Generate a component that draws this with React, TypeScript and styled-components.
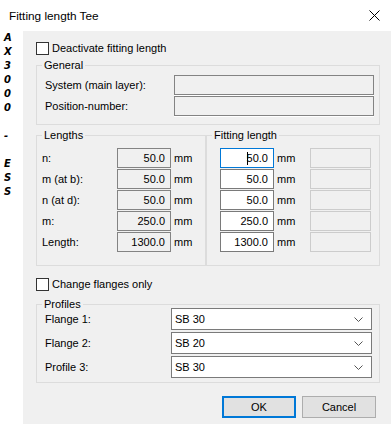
import React from 'react';
import styled, { createGlobalStyle, css } from 'styled-components';

const GlobalStyle = createGlobalStyle`
  html, body { margin: 0; padding: 0; background: #fff; }
  body {
    font-family: "Liberation Sans", Arial, sans-serif;
    font-size: 11px;
    color: #000;
  }
`;

const Window = styled.div`
  width: 391px;
  height: 424px;
  display: flex;
  flex-direction: column;
  background: #fff;
  overflow: hidden;
`;

const TitleBar = styled.div`
  height: 31px;
  flex: none;
  display: flex;
  align-items: center;
  justify-content: space-between;
  padding: 0 11px 0 9px;
  font-size: 11.8px;
`;

const Body = styled.div`
  flex: 1;
  display: flex;
  min-height: 0;
`;

const SideStrip = styled.div`
  width: 23px;
  flex: none;
  display: flex;
  flex-direction: column;
  padding-left: 4px;
  box-sizing: border-box;
  font-family: "DejaVu Sans", Verdana, sans-serif;
  font-weight: bold;
  font-style: italic;
  font-size: 10px;
  line-height: 14px;
`;

const SideChar = styled.span`
  height: 14px;
`;

const Client = styled.div`
  flex: 1;
  background: #f0f0f0;
  padding: 10px 11px 0 13px;
  display: flex;
  flex-direction: column;
`;

const CheckRow = styled.label<{ $top?: number }>`
  display: flex;
  align-items: center;
  gap: 3px;
  height: 14px;
  margin-top: ${(p) => p.$top ?? 0}px;
`;

const CheckBox = styled.span`
  width: 13px;
  height: 13px;
  box-sizing: border-box;
  border: 1px solid #333;
  background: #fff;
`;

const Group = styled.div<{ $top: number; $width?: number }>`
  position: relative;
  border: 1px solid #dcdcdc;
  margin-top: ${(p) => p.$top}px;
  ${(p) => p.$width && css`width: ${p.$width}px;`}
  box-sizing: border-box;
`;

const Legend = styled.span`
  position: absolute;
  top: -8px;
  left: 5px;
  padding: 0 2px;
  background: #f0f0f0;
  line-height: 15px;
`;

const FormRows = styled.div<{ $pad: string; $cols: string; $gap: number }>`
  display: grid;
  grid-template-columns: ${(p) => p.$cols};
  grid-auto-rows: auto;
  row-gap: ${(p) => p.$gap}px;
  align-items: center;
  padding: ${(p) => p.$pad};
`;

const Split = styled.div`
  display: flex;
  margin-top: 10px;
  height: 131px;
`;

type FieldKind = 'readonly' | 'edit' | 'focus' | 'disabled' | 'sunken';

const Field = styled.div<{ $kind: FieldKind; $w: number; $h?: number }>`
  width: ${(p) => p.$w}px;
  height: ${(p) => p.$h ?? 20}px;
  box-sizing: border-box;
  display: flex;
  align-items: center;
  justify-content: flex-end;
  padding: 0 5px 0 3px;
  border: 1px solid #7a7a7a;
  background: #fff;
  ${(p) =>
    p.$kind === 'readonly' &&
    css`
      background: #f0f0f0;
      border-color: #838383;
    `}
  ${(p) =>
    p.$kind === 'focus' &&
    css`
      border-color: #0078d7;
    `}
  ${(p) =>
    p.$kind === 'disabled' &&
    css`
      background: #f0f0f0;
      border-color: #cccccc;
    `}
  ${(p) =>
    p.$kind === 'sunken' &&
    css`
      background: #f0f0f0;
      border-color: #838383;
      box-shadow: 0 1px 0 #fff;
    `}
`;

const Caret = styled.span`
  width: 1px;
  height: 13px;
  background: #000;
  margin-right: -1px;
`;

const Unit = styled.span<{ $ml: number }>`
  margin-left: ${(p) => p.$ml}px;
`;

const Select = styled.div`
  height: 22px;
  box-sizing: border-box;
  border: 1px solid #7a7a7a;
  background: #fff;
  display: flex;
  align-items: center;
  justify-content: space-between;
  padding: 0 8px 0 3px;
`;

const Buttons = styled.div`
  display: flex;
  justify-content: flex-end;
  gap: 6px;
  margin-top: 13px;
  padding-right: 4px;
`;

const Button = styled.div<{ $default?: boolean }>`
  width: 74px;
  height: 22px;
  box-sizing: border-box;
  display: flex;
  align-items: center;
  justify-content: center;
  background: #e1e1e1;
  border: 1px solid #adadad;
  ${(p) =>
    p.$default &&
    css`
      border: 2px solid #0078d7;
    `}
`;

const Chevron = () => (
  <svg width="9" height="5" viewBox="0 0 9 5">
    <path d="M0.5 0.5 L4.5 4.5 L8.5 0.5" fill="none" stroke="#555" strokeWidth="1" />
  </svg>
);

const CloseIcon = () => (
  <svg width="11" height="11" viewBox="0 0 11 11">
    <path d="M0.5 0.5 L10.5 10.5 M10.5 0.5 L0.5 10.5" stroke="#000" strokeWidth="1" />
  </svg>
);

const sideChars = ['A', 'X', '3', '0', '0', '0', '', '-', '', 'E', 'S', 'S'];

const lengths = [
  { label: 'n:', value: '50.0' },
  { label: 'm (at b):', value: '50.0' },
  { label: 'n (at d):', value: '50.0' },
  { label: 'm:', value: '250.0' },
  { label: 'Length:', value: '1300.0' },
];

const profiles = [
  { label: 'Flange 1:', value: 'SB 30' },
  { label: 'Flange 2:', value: 'SB 20' },
  { label: 'Profile 3:', value: 'SB 30' },
];

export default function App(): JSX.Element {
  return (
    <>
      <GlobalStyle />
      <Window>
        <TitleBar>
          <span>Fitting length Tee</span>
          <CloseIcon />
        </TitleBar>
        <Body>
          <SideStrip>
            {sideChars.map((c, i) => (
              <SideChar key={i}>{c}</SideChar>
            ))}
          </SideStrip>
          <Client>
            <CheckRow>
              <CheckBox />
              Deactivate fitting length
            </CheckRow>

            <Group $top={10}>
              <Legend>General</Legend>
              <FormRows $pad="9px 5px 8px 8px" $cols="1fr 200px" $gap={1}>
                <span>System (main layer):</span>
                <Field $kind="sunken" $w={200} />
                <span>Position-number:</span>
                <Field $kind="sunken" $w={200} />
              </FormRows>
            </Group>

            <Split>
              <Group $top={0} $width={170}>
                <Legend>Lengths</Legend>
                <FormRows $pad="12px 0 0 5px" $cols="75px 54px auto" $gap={1}>
                  {lengths.map((r) => (
                    <React.Fragment key={r.label}>
                      <span>{r.label}</span>
                      <Field $kind="readonly" $w={54}>
                        {r.value}
                      </Field>
                      <Unit $ml={3}>mm</Unit>
                    </React.Fragment>
                  ))}
                </FormRows>
              </Group>
              <Group $top={0} $width={174}>
                <Legend>Fitting length</Legend>
                <FormRows $pad="12px 0 0 13px" $cols="54px 36px 61px" $gap={1}>
                  {lengths.map((r, i) => (
                    <React.Fragment key={r.label}>
                      <Field $kind={i === 0 ? 'focus' : 'edit'} $w={54}>
                        {i === 0 && <Caret />}
                        {r.value}
                      </Field>
                      <Unit $ml={3}>mm</Unit>
                      <Field $kind="disabled" $w={61} />
                    </React.Fragment>
                  ))}
                </FormRows>
              </Group>
            </Split>

            <CheckRow $top={11}>
              <CheckBox />
              Change flanges only
            </CheckRow>

            <Group $top={13}>
              <Legend>Profiles</Legend>
              <FormRows $pad="3px 7px 4px 8px" $cols="1fr 201px" $gap={2}>
                {profiles.map((r) => (
                  <React.Fragment key={r.label}>
                    <span>{r.label}</span>
                    <Select>
                      <span>{r.value}</span>
                      <Chevron />
                    </Select>
                  </React.Fragment>
                ))}
              </FormRows>
            </Group>

            <Buttons>
              <Button $default>OK</Button>
              <Button>Cancel</Button>
            </Buttons>
          </Client>
        </Body>
      </Window>
    </>
  );
}
